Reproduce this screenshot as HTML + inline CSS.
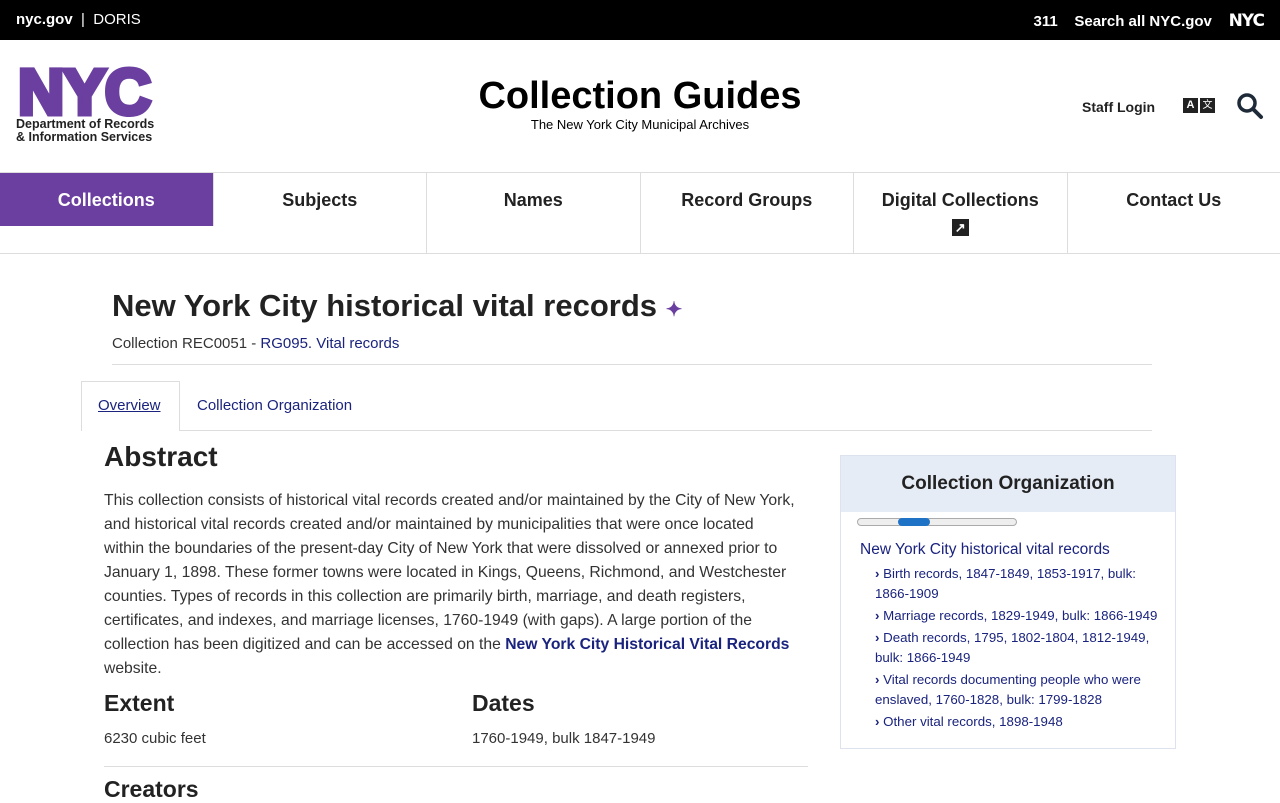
<!DOCTYPE html>
<html><head><meta charset="utf-8"><style>
*{box-sizing:border-box;margin:0;padding:0}
body{width:1280px;height:800px;overflow:hidden;font-family:"Liberation Sans",sans-serif;color:#222;background:#fff;position:relative}
.top{height:40px;background:#000;color:#fff;font-size:15px;position:relative}
.top .l{position:absolute;left:16px;top:11px}
.top .r{position:absolute;right:16px;top:11px;font-weight:bold}
.abs{position:absolute}
a{color:#1a237e;text-decoration:none}
.nav{position:absolute;top:172px;left:0;width:1280px;height:82px;border-top:1px solid #ddd;border-bottom:1px solid #ddd;display:flex}
.nav div{flex:1;border-right:1px solid #ddd;text-align:center;font-weight:bold;font-size:18px;padding-top:17px;color:#222}
.nav div.act{background:#6b3fa0;color:#fff;height:53px}
.p{font-size:15.7px;line-height:24px;color:#333}
.side li{list-style:none;font-size:13.3px;line-height:20px;color:#1a237e;margin-bottom:2px}
</style></head><body>
<div class="top"><span class="l"><b>nyc.gov</b> &nbsp;|&nbsp; DORIS</span><span class="r">311 &nbsp;&nbsp;&nbsp;Search all NYC.gov &nbsp;&nbsp;&nbsp;<span style="font-family:'DejaVu Sans';font-weight:900;font-size:17px;letter-spacing:-1px">NYC</span></span></div>
<div class="abs" style="left:18px;top:62px;font-weight:bold;font-size:64px;color:#6b3fa0;-webkit-text-stroke:5px #6b3fa0;letter-spacing:-1px;line-height:60px">NYC</div>
<div class="abs" style="left:16px;top:118px;font-size:12.5px;font-weight:bold;line-height:13px;color:#222">Department of Records<br>&amp; Information Services</div>
<div class="abs" style="left:0;width:1280px;top:75px;text-align:center;font-size:38px;font-weight:bold;color:#000">Collection Guides</div>
<div class="abs" style="left:0;width:1280px;top:117px;text-align:center;font-size:13px;color:#000">The New York City Municipal Archives</div>
<div class="abs" style="left:1082px;top:99px;font-size:14px;font-weight:bold">Staff Login</div>
<div class="abs" style="left:1183px;top:98px;width:15px;height:15px;background:#222;color:#fff;font-size:11px;font-weight:bold;text-align:center;line-height:15px">A</div>
<div class="abs" style="left:1200px;top:98px;width:15px;height:15px;background:#222;color:#fff;font-size:10px;text-align:center;line-height:15px">文</div>
<svg class="abs" style="left:1236px;top:92px" width="28" height="28" viewBox="0 0 28 28"><circle cx="11" cy="11" r="8" fill="none" stroke="#1e2a38" stroke-width="3.5"/><line x1="17" y1="17" x2="25" y2="25" stroke="#1e2a38" stroke-width="4" stroke-linecap="round"/></svg>
<div class="nav"><div class="act">Collections</div><div>Subjects</div><div>Names</div><div>Record Groups</div><div>Digital Collections<br><span style="display:inline-block;margin-top:8px;width:17px;height:17px;background:#222;color:#fff;font-size:13px;line-height:17px">&#8599;</span></div><div style="border-right:none">Contact Us</div></div>
<div class="abs" style="left:112px;top:288px;font-size:31px;font-weight:bold;color:#222">New York City historical vital records <span style="color:#6b3fa0;font-size:20px">&#10022;</span></div>
<div class="abs" style="left:112px;top:335px;font-size:15px;color:#333">Collection REC0051 - <a>RG095. Vital records</a></div>
<div class="abs" style="left:112px;top:364px;width:1040px;border-top:1px solid #ddd"></div>
<div class="abs" style="left:81px;top:381px;width:99px;height:50px;border:1px solid #ddd;border-bottom:none;background:#fff;z-index:2"></div>
<div class="abs" style="left:81px;top:430px;width:1071px;border-top:1px solid #ddd"></div>
<div class="abs" style="left:98px;top:397px;font-size:15px;color:#1a237e;text-decoration:underline;z-index:3">Overview</div>
<div class="abs" style="left:197px;top:397px;font-size:15px;color:#1a237e">Collection Organization</div>
<div class="abs" style="left:104px;top:441px;font-size:28px;font-weight:bold">Abstract</div>
<div class="abs p" style="left:104px;top:489px;white-space:nowrap">This collection consists of historical vital records created and/or maintained by the City of New York,<br>and historical vital records created and/or maintained by municipalities that were once located<br>within the boundaries of the present-day City of New York that were dissolved or annexed prior to<br>January 1, 1898. These former towns were located in Kings, Queens, Richmond, and Westchester<br>counties. Types of records in this collection are primarily birth, marriage, and death registers,<br>certificates, and indexes, and marriage licenses, 1760-1949 (with gaps). A large portion of the<br>collection has been digitized and can be accessed on the <a style="font-weight:bold">New York City Historical Vital Records</a><br>website.</div>
<div class="abs" style="left:104px;top:690px;font-size:23px;font-weight:bold">Extent</div>
<div class="abs p" style="left:104px;top:727px;font-size:15px">6230 cubic feet</div>
<div class="abs" style="left:472px;top:690px;font-size:23px;font-weight:bold">Dates</div>
<div class="abs p" style="left:472px;top:727px;font-size:15px">1760-1949, bulk 1847-1949</div>
<div class="abs" style="left:104px;top:766px;width:704px;border-top:1px solid #ddd"></div>
<div class="abs" style="left:104px;top:776px;font-size:23px;font-weight:bold">Creators</div>
<div class="abs" style="left:840px;top:455px;width:336px;height:294px;border:1px solid #dde3ee">
<div style="height:56px;background:#e6ecf6;text-align:center;font-size:19px;font-weight:bold;padding-top:17px;color:#222">Collection Organization</div>
<div style="position:absolute;left:16px;top:62px;width:160px;height:8px;border:1px solid #aaa;border-radius:4px;background:#eee"></div>
<div style="position:absolute;left:57px;top:62px;width:32px;height:8px;border-radius:4px;background:#1f73c7"></div>
<div style="position:absolute;left:19px;top:85px;font-size:15.5px;color:#1a237e">New York City historical vital records</div>
<ul class="side" style="position:absolute;left:34px;top:108px;width:290px">
<li><b>&#8250;</b> Birth records, 1847-1849, 1853-1917, bulk: 1866-1909</li>
<li><b>&#8250;</b> Marriage records, 1829-1949, bulk: 1866-1949</li>
<li><b>&#8250;</b> Death records, 1795, 1802-1804, 1812-1949, bulk: 1866-1949</li>
<li><b>&#8250;</b> Vital records documenting people who were enslaved, 1760-1828, bulk: 1799-1828</li>
<li><b>&#8250;</b> Other vital records, 1898-1948</li>
</ul></div>
</body></html>
